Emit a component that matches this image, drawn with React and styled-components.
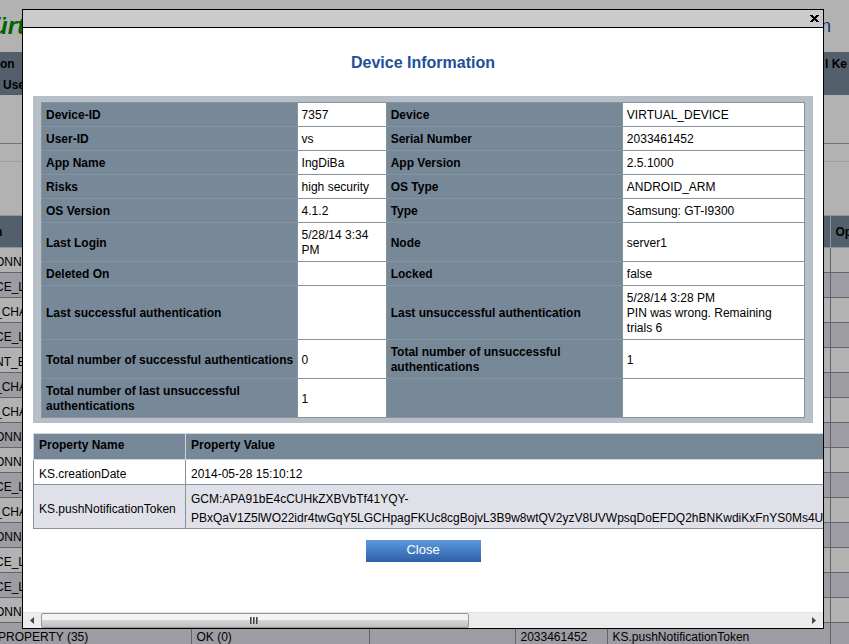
import React from "react";
import styled, { createGlobalStyle } from "styled-components";

const GlobalStyle = createGlobalStyle`
  * { box-sizing: border-box; }
  html, body { margin: 0; background: #fff; }
  body {
    height: 100vh;
    overflow: hidden;
    color: #000;
    font: 12px/15px "Liberation Sans", Arial, sans-serif;
  }
`;

const Page = styled.div`
  height: 100vh;
  overflow: hidden;
`;

const Header = styled.header`
  display: flex;
  justify-content: space-between;
  align-items: center;
  height: 52px;
  padding-right: 18px;
`;

const Brand = styled.span`
  margin-left: -7px;
  color: #008c00;
  font-size: 24px;
  line-height: 30px;
  font-weight: bold;
  font-style: italic;
`;

const Product = styled.span`
  color: #204f9c;
  font-size: 18px;
`;

const Nav = styled.nav`
  display: grid;
  grid-template-columns: 1fr 24px;
  align-content: center;
  row-gap: 6px;
  height: 43px;
  padding-top: 2px;
  background: #778899;
  white-space: nowrap;
`;

const NavLink = styled.a`
  padding-left: ${(p) => (p.$indent ? "3px" : "0")};
  color: #000;
  font-weight: bold;
  text-decoration: none;
`;

const Filters = styled.div`
  height: 120px;
  padding-top: 48px;
`;

const FilterLine = styled.div`
  height: 19px;
  border-top: 1px solid #aaa;
  border-bottom: 1px solid #e4e4e4;
`;

const LogTable = styled.table`
  width: 100%;
  table-layout: fixed;
  border-collapse: collapse;
  white-space: nowrap;

  col:nth-child(1) { width: 191px; }
  col:nth-child(2) { width: 178px; }
  col:nth-child(3) { width: 146px; }
  col:nth-child(4) { width: 92px; }
  col:nth-child(6) { width: 19px; }

  th {
    height: 32px;
    padding: 2px 5px 0;
    background: #778899;
    border: 1px solid #cfd6dc;
    text-align: left;
  }
  td {
    height: 25px;
    padding: 4px 5px 0;
    border: 1px solid #84949c;
  }
  tbody tr:nth-child(even) { background: #e0e0e8; }
  th:first-child, td:first-child { padding-left: 0; border-left: 0; text-indent: -5px; }
  tr:last-child td:first-child { text-indent: -2px; }
  th:last-child, td:last-child { border-right: 0; }
`;

const Backdrop = styled.div`
  position: fixed;
  inset: 0;
  padding: 9px 25px 15px 22px;
  background: rgba(0, 0, 0, 0.3);
`;

const Dialog = styled.section`
  border: 1px solid #000;
  background: #fff;
  overflow: hidden;
`;

const TitleBar = styled.div`
  display: flex;
  justify-content: flex-end;
  height: 18px;
  padding-right: 4px;
  border-bottom: 1px solid #000;
  background: #ccc;
`;

const IconButton = styled.button`
  display: flex;
  align-items: center;
  padding: 0;
  border: 0;
  background: none;
`;

const DialogBody = styled.div`
  padding: 25px 10px 50px;
`;

const Title = styled.h1`
  margin: 0 0 23px;
  color: #224f96;
  font-size: 16px;
  line-height: 20px;
  text-align: center;
`;

const Panel = styled.div`
  padding: 6px 8px 5px;
  background: #b6bfc7;
`;

const InfoTable = styled.table`
  width: 100%;
  table-layout: fixed;
  border-collapse: collapse;

  col:nth-child(1) { width: 33.5%; }
  col:nth-child(2) { width: 89px; }
  col:nth-child(3) { width: 236px; }
  col:nth-child(4) { width: 182px; }

  th, td {
    height: 24px;
    padding: 5px 4px 3px;
    border: 1px solid #84949c;
    text-align: left;
  }
  th {
    padding-right: 1px;
    background: #778899;
  }
  td { background: #fff; }
`;

const PropertyTable = styled.table`
  width: calc(100% + 60px);
  margin-top: 10px;
  border-collapse: collapse;
  line-height: 19px;
  white-space: nowrap;

  col:first-child { width: 152px; }

  th, td {
    padding: 5px 5px 0;
    border: 1px solid #84949c;
    text-align: left;
  }
  th {
    padding: 2px 5px 4px;
    background: #778899;
    border-color: #cfd6dc;
  }
  tbody tr:nth-child(even) { background: #e0e0e8; }
`;

const Actions = styled.div`
  display: flex;
  justify-content: center;
  padding-top: 11px;
`;

const CloseButton = styled.button`
  width: 115px;
  height: 22px;
  padding: 0 0 3px;
  border: 0;
  background: linear-gradient(#5c9add, #2f5fa8);
  color: #fff;
  font: 13px/18px "Liberation Sans", Arial, sans-serif;
`;

const ScrollBar = styled.div`
  display: grid;
  grid-template-columns: 18px 1fr 18px;
  height: 16px;
  border-top: 1px solid #e3e3e3;
  background: #ececec;
`;

const ScrollArrow = styled.span`
  display: grid;
  place-items: center;
`;

const Thumb = styled.div`
  display: grid;
  place-items: center;
  width: 56%;
  height: 15px;
  border: 1px solid #979797;
  border-radius: 2px;
  background: linear-gradient(#f4f4f4 45%, #d6d6d6 50%, #c0c0c0);
`;

const info = [
  ["Device-ID", "7357", "Device", "VIRTUAL_DEVICE"],
  ["User-ID", "vs", "Serial Number", "2033461452"],
  ["App Name", "IngDiBa", "App Version", "2.5.1000"],
  ["Risks", "high security", "OS Type", "ANDROID_ARM"],
  ["OS Version", "4.1.2", "Type", "Samsung: GT-I9300"],
  ["Last Login", "5/28/14 3:34 PM", "Node", "server1"],
  ["Deleted On", "", "Locked", "false"],
  [
    "Last successful authentication",
    "",
    "Last unsuccessful authentication",
    <>5/28/14 3:28 PM<br />PIN was wrong. Remaining trials 6</>,
  ],
  ["Total number of successful authentications", "0", "Total number of unsuccessful authentications", "1"],
  ["Total number of last unsuccessful authentications", "1", "", ""],
];

const events = [
  "ONN", "CE_L", "_CHA", "CE_L", "NT_E", "_CHA", "_CHA", "ONN",
  "ONN", "CE_L", "_CHA", "ONN", "CE_L", "CE_L", "ONN",
].map((name) => [name, "", "", "", "", ""]);
events.push(["PROPERTY (35)", "OK (0)", "", "2033461452", "KS.pushNotificationToken", ""]);

function Background() {
  return (
    <Page>
      <Header>
        <Brand>ürt</Brand>
        <Product>n</Product>
      </Header>
      <Nav>
        <NavLink href="#">on</NavLink>
        <NavLink href="#">l Ke</NavLink>
        <NavLink href="#" $indent>Use</NavLink>
      </Nav>
      <Filters><FilterLine /></Filters>
      <LogTable>
        <colgroup><col /><col /><col /><col /><col /><col /></colgroup>
        <thead>
          <tr><th>n</th><th /><th /><th /><th /><th>Op</th></tr>
        </thead>
        <tbody>
          {events.map((row, i) => (
            <tr key={i}>{row.map((cell, j) => <td key={j}>{cell}</td>)}</tr>
          ))}
        </tbody>
      </LogTable>
    </Page>
  );
}

export default function App() {
  return (
    <>
      <GlobalStyle />
      <Background />
      <Backdrop>
        <Dialog role="dialog" aria-labelledby="device-title">
          <TitleBar>
            <IconButton aria-label="Close dialog">
              <svg width="9" height="9" viewBox="0 0 9 9" shapeRendering="crispEdges">
                <path d="M0 1h3v1h1v1h1V2h1V1h3v1H8v1H7v1H6v1h1v1h1v1h1v1H6V7H5V6H4v1H3v1H0V7h1V6h1V5h1V4H2V3H1V2H0z" />
              </svg>
            </IconButton>
          </TitleBar>
          <DialogBody>
            <Title id="device-title">Device Information</Title>
            <Panel>
              <InfoTable>
                <colgroup><col /><col /><col /><col /></colgroup>
                <tbody>
                  {info.map(([a, b, c, d]) => (
                    <tr key={a}><th>{a}</th><td>{b}</td><th>{c}</th><td>{d}</td></tr>
                  ))}
                </tbody>
              </InfoTable>
            </Panel>
            <PropertyTable>
              <colgroup><col /><col /></colgroup>
              <thead>
                <tr><th>Property Name</th><th>Property Value</th></tr>
              </thead>
              <tbody>
                <tr><td>KS.creationDate</td><td>2014-05-28 15:10:12</td></tr>
                <tr>
                  <td>KS.pushNotificationToken</td>
                  <td>
                    GCM:APA91bE4cCUHkZXBVbTf41YQY-<br />
                    PBxQaV1Z5lWO22idr4twGqY5LGCHpagFKUc8cgBojvL3B9w8wtQV2yzV8UVWpsqDoEFDQ2hBNKwdiKxFnYS0Ms4U
                  </td>
                </tr>
              </tbody>
            </PropertyTable>
            <Actions><CloseButton>Close</CloseButton></Actions>
          </DialogBody>
          <ScrollBar>
            <ScrollArrow>
              <svg width="4" height="7" viewBox="0 0 4 7"><path d="M4 0v7L0 3.5z" fill="#444" /></svg>
            </ScrollArrow>
            <Thumb>
              <svg width="9" height="7" viewBox="0 0 9 7" shapeRendering="crispEdges">
                <path d="M0 0h2v7H0zM3 0h2v7H3zM6 0h2v7H6z" fill="#888" />
                <path d="M0 0h1v7H0zM3 0h1v7H3zM6 0h1v7H6z" fill="#444" />
              </svg>
            </Thumb>
            <ScrollArrow>
              <svg width="4" height="7" viewBox="0 0 4 7"><path d="M0 0v7l4-3.5z" fill="#444" /></svg>
            </ScrollArrow>
          </ScrollBar>
        </Dialog>
      </Backdrop>
    </>
  );
}
